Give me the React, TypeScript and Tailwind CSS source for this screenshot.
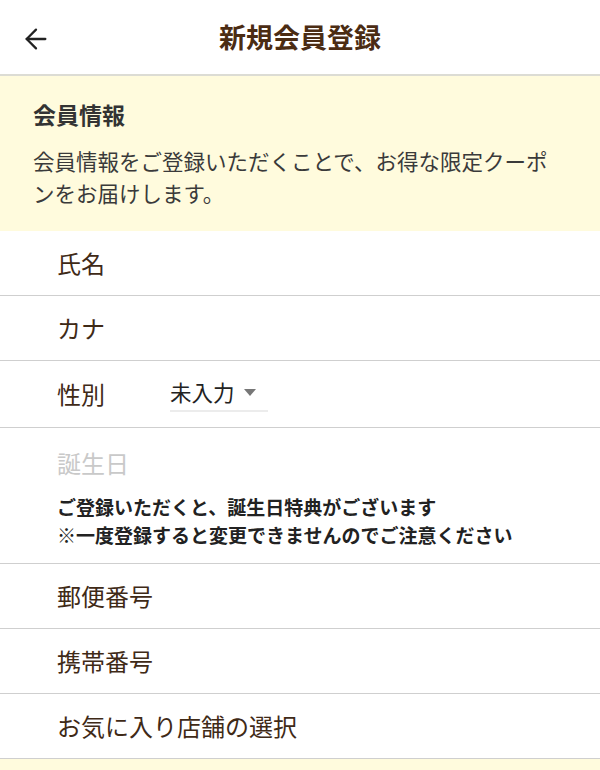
import { ArrowLeft } from "lucide-react";

const font = { fontFamily: '"Noto Sans CJK JP", "Noto Sans", sans-serif' };

function Row({ label, className = "" }: { label: string; className?: string }) {
  return (
    <div className={`flex h-[65px] items-center border-b-[1.5px] border-[#cfcfcf] pl-[57px] ${className}`}>
      <span className="text-[24px] leading-none text-[#3f2a17]">{label}</span>
    </div>
  );
}

export default function App() {
  return (
    <div className="h-[770px] w-[600px] overflow-hidden bg-white" style={font}>
      <header className="relative flex h-[76px] items-center justify-center border-b-2 border-[#dcdcd4] bg-white">
        <button className="absolute left-[20px] top-[23px] text-[#222]">
          <ArrowLeft className="h-[32px] w-[32px]" strokeWidth={1.7} />
        </button>
        <h1 className="text-[27px] font-bold text-[#4b2c13]">新規会員登録</h1>
      </header>

      <section className="h-[155px] bg-[#fffbdd] pl-[33px] pr-[36px] pt-[27px]">
        <h2 className="text-[23px] font-bold leading-none text-[#333]">会員情報</h2>
        <p className="mt-[19px] text-[21.5px] leading-[32px] text-[#3a3a3a]">
          会員情報をご登録いただくことで、お得な限定クーポンをお届けします。
        </p>
      </section>

      <Row label="氏名" className="h-[64px]" />
      <Row label="カナ" />

      <div className="flex h-[67px] items-center border-b-[1.5px] border-[#cfcfcf] pl-[57px]">
        <span className="w-[113px] text-[24px] leading-none text-[#3f2a17]">性別</span>
        <div className="flex h-[36px] w-[98px] items-center border-b-2 border-[#ececec] pb-[2px]">
          <span className="text-[21.5px] leading-none text-[#222]">未入力</span>
          <svg className="ml-[9px]" width="12" height="7" viewBox="0 0 12 7">
            <path d="M0 0h12L6 7z" fill="#777" />
          </svg>
        </div>
      </div>

      <div className="h-[136px] border-b-[1.5px] border-[#cfcfcf] pl-[57px] pt-[23px]">
        <div className="text-[24px] leading-none text-[#c9c9c9]">誕生日</div>
        <div className="mt-[18px] text-[19px] font-bold leading-[28px] text-[#222]">
          <div>ご登録いただくと、誕生日特典がございます</div>
          <div>※一度登録すると変更できませんのでご注意ください</div>
        </div>
      </div>

      <Row label="郵便番号" />
      <Row label="携帯番号" />
      <Row label="お気に入り店舗の選択" />
      <div className="h-[20px] bg-[#fffbdd]" />
    </div>
  );
}
